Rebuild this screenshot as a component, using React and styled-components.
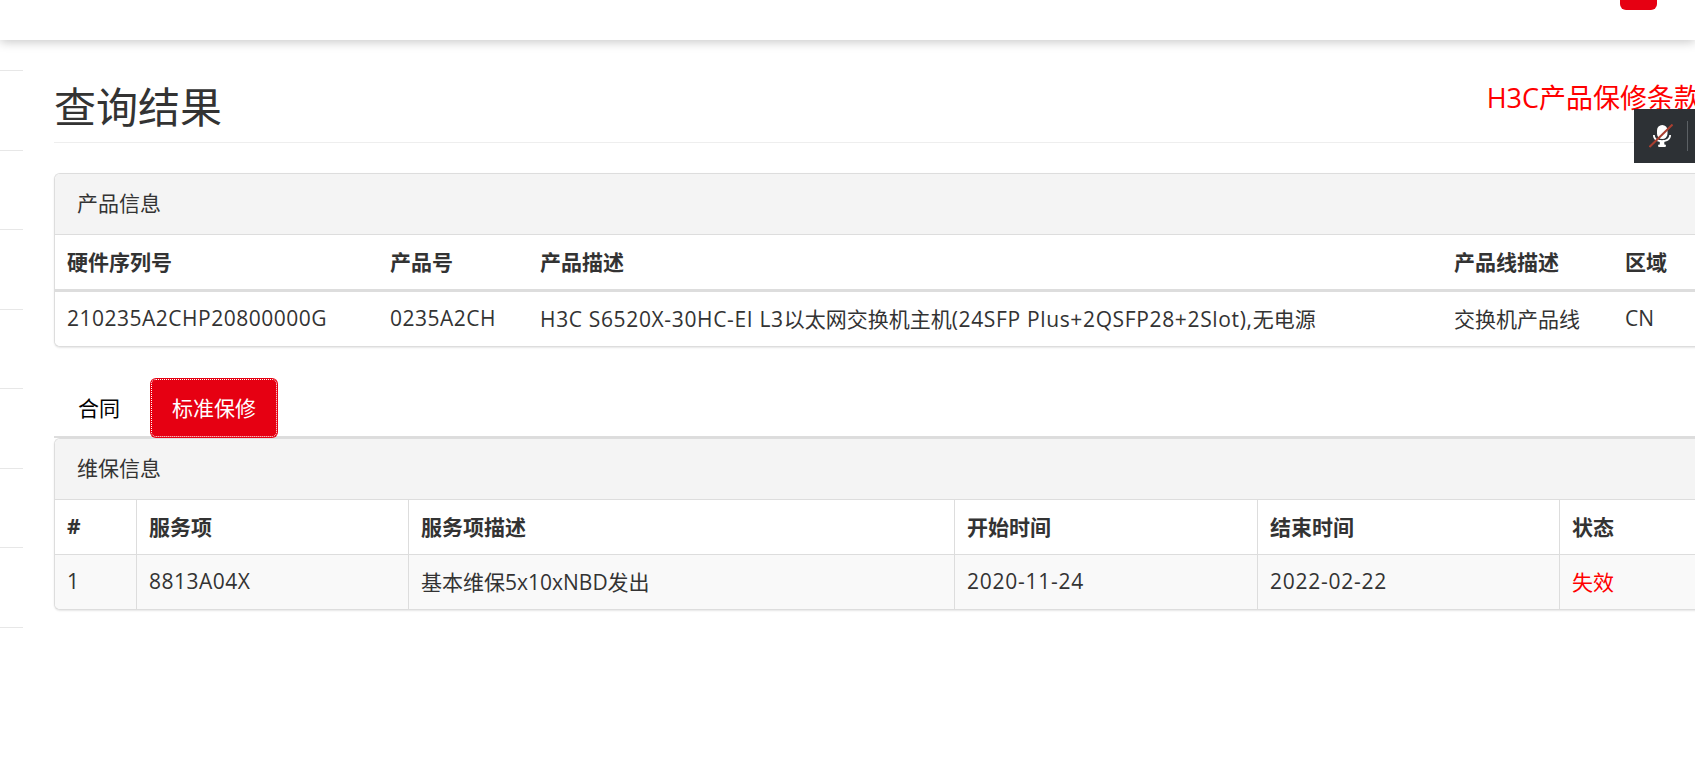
import React from "react";
import styled, { createGlobalStyle } from "styled-components";

const Global = createGlobalStyle`
  html, body { margin: 0; padding: 0; background: #fff; overflow: hidden; height: 100%; }
  body { font-family: "Open Sans", "Noto Sans CJK SC", sans-serif; font-size: 21px; color: #333; }
  * { box-sizing: border-box; }
`;

const Page = styled.div`
  position: relative;
  width: 1695px;
  height: 768px;
  overflow: hidden;
`;

const Header = styled.header`
  position: relative;
  z-index: 2;
  height: 40px;
  background: #fff;
  box-shadow: 0 2px 10px rgba(0, 0, 0, 0.22);
  display: flex;
  justify-content: flex-end;
  padding-right: 38px;
`;

const HeaderButton = styled.div`
  width: 37px;
  height: 10px;
  background: #e60012;
  border-radius: 0 0 6px 6px;
`;

const Body = styled.div`
  display: flex;
  width: 1840px;
`;

const Sidebar = styled.aside`
  flex: 0 0 23px;
  padding-top: 30px;
`;

const SideItem = styled.div`
  height: 79.5px;
  border-top: 1px solid #e7e7e7;
`;

const Main = styled.main`
  flex: 1;
  margin-left: 31px;
  min-width: 0;
`;

const TitleRow = styled.div`
  display: flex;
  justify-content: space-between;
  align-items: flex-start;
  height: 59px;
  margin-top: 44px;
  border-bottom: 1px solid #eee;
`;

const Title = styled.h1`
  margin: 0;
  font-size: 42px;
  line-height: 46px;
  font-weight: 400;
  color: #333;
`;

const TermsLink = styled.a`
  font-size: 27px;
  line-height: 30px;
  margin-top: -1px;
  margin-right: 139px;
  color: #f00;
  white-space: nowrap;
`;

const Latin = styled.span`
  letter-spacing: ${(p) => p.$spacing || 0.5}px;
`;

const Panel = styled.section`
  border: 1px solid #ddd;
  border-right: 0;
  border-radius: 6px 0 0 6px;
  background: #fff;
  box-shadow: 0 1px 2px rgba(0, 0, 0, 0.1);
  margin-top: ${(p) => p.$top || 0}px;
  overflow: hidden;
`;

const PanelHead = styled.div`
  height: 61px;
  padding: 0 0 2px 22px;
  display: flex;
  align-items: center;
  background: #f4f4f4;
  border-bottom: 1px solid #ddd;
  line-height: 30px;
`;

const Table = styled.table`
  width: 100%;
  table-layout: fixed;
  border-collapse: separate;
  border-spacing: 0;
`;

const Th = styled.th`
  height: ${(p) => p.$height}px;
  padding: 0 12px 2px;
  text-align: left;
  font-weight: 700;
  white-space: nowrap;
  border-bottom: ${(p) => (p.$thick ? "3px" : "1px")} solid #ddd;
  border-left: ${(p) => (p.$lined ? "1px solid #ddd" : "0")};
`;

const Td = styled.td`
  height: 54px;
  padding: 0 12px 2px;
  white-space: nowrap;
  background: ${(p) => (p.$striped ? "#f9f9f9" : "#fff")};
  border-left: ${(p) => (p.$lined ? "1px solid #ddd" : "0")};
  color: ${(p) => (p.$alert ? "#f00" : "#333")};
`;

const Tabs = styled.nav`
  display: flex;
  height: 60px;
  margin-top: 31px;
  border-bottom: 2px solid #ddd;
`;

const Tab = styled.div`
  flex: 0 0 ${(p) => p.$width}px;
  height: 60px;
  padding: 0 ${(p) => p.$pad}px 2px;
  display: flex;
  align-items: center;
  border-radius: 6px;
  color: ${(p) => (p.$active ? "#fff" : "#000")};
  background: ${(p) => (p.$active ? "#e60012" : "transparent")};
  outline: ${(p) => (p.$active ? "1px dotted #fff" : "none")};
  outline-offset: -2px;
  white-space: nowrap;
`;

const FloatBar = styled.div`
  position: absolute;
  z-index: 3;
  top: 109px;
  left: 1634px;
  width: 61px;
  height: 54px;
  background: #2d3135;
  display: flex;
  align-items: center;
  padding-left: 15px;
  gap: 14px;
`;

const BarDivider = styled.span`
  width: 1px;
  height: 30px;
  background: #5c6165;
`;

const MicOff = () => (
  <svg width="24" height="24" viewBox="0 0 24 24" aria-hidden="true">
    <rect x="8" y="1" width="10.5" height="14" rx="5.2" fill="#fff" />
    <path d="M4 11 C4 15.8 7.5 18 13 18 C18.5 18 22 15.8 22 11 L20.2 11 C20.2 14.6 17 16.2 13 16.2 C9 16.2 5.8 14.6 5.8 11 Z" fill="#fff" />
    <rect x="10.8" y="17" width="4.5" height="4" fill="#fff" />
    <rect x="9" y="20.5" width="8" height="2.5" rx="1.2" fill="#fff" />
    <line x1="0.5" y1="23" x2="23.5" y2="0.5" stroke="#a93f30" strokeWidth="2" />
  </svg>
);

const productCols = [323, 150, 914, 171];
const serviceCols = [81, 272, 546, 303, 302];

export default function App() {
  return (
    <Page>
      <Global />
      <Header>
        <HeaderButton />
      </Header>
      <Body>
        <Sidebar>
          {Array.from({ length: 8 }, (_, i) => <SideItem key={i} />)}
        </Sidebar>
        <Main>
          <TitleRow>
            <Title>查询结果</Title>
            <TermsLink>H3C产品保修条款</TermsLink>
          </TitleRow>
          <Panel $top={30}>
            <PanelHead>产品信息</PanelHead>
            <Table>
              <colgroup>
                {productCols.map((w, i) => <col key={i} style={{ width: w }} />)}
                <col />
              </colgroup>
              <thead>
                <tr>
                  <Th $height={57} $thick>硬件序列号</Th>
                  <Th $height={57} $thick>产品号</Th>
                  <Th $height={57} $thick>产品描述</Th>
                  <Th $height={57} $thick>产品线描述</Th>
                  <Th $height={57} $thick>区域</Th>
                </tr>
              </thead>
              <tbody>
                <tr>
                  <Td><Latin>210235A2CHP20800000G</Latin></Td>
                  <Td><Latin>0235A2CH</Latin></Td>
                  <Td><Latin $spacing={0.65}>H3C S6520X-30HC-EI L3</Latin>以太网交换机主机<Latin $spacing={0.65}>(24SFP Plus+2QSFP28+2Slot),</Latin>无电源</Td>
                  <Td>交换机产品线</Td>
                  <Td>CN</Td>
                </tr>
              </tbody>
            </Table>
          </Panel>
          <Tabs>
            <Tab $width={96} $pad={24}>合同</Tab>
            <Tab $active $width={128} $pad={22}>标准保修</Tab>
          </Tabs>
          <Panel>
            <PanelHead>维保信息</PanelHead>
            <Table>
              <colgroup>
                {serviceCols.map((w, i) => <col key={i} style={{ width: w }} />)}
                <col />
              </colgroup>
              <thead>
                <tr>
                  {["#", "服务项", "服务项描述", "开始时间", "结束时间", "状态"].map((h, i) => (
                    <Th key={h} $height={55} $lined={i > 0}>{h}</Th>
                  ))}
                </tr>
              </thead>
              <tbody>
                <tr>
                  <Td $striped>1</Td>
                  <Td $striped $lined><Latin>8813A04X</Latin></Td>
                  <Td $striped $lined>基本维保5x10xNBD发出</Td>
                  <Td $striped $lined><Latin $spacing={0.75}>2020-11-24</Latin></Td>
                  <Td $striped $lined><Latin $spacing={0.75}>2022-02-22</Latin></Td>
                  <Td $striped $lined $alert>失效</Td>
                </tr>
              </tbody>
            </Table>
          </Panel>
        </Main>
      </Body>
      <FloatBar>
        <MicOff />
        <BarDivider />
      </FloatBar>
    </Page>
  );
}
